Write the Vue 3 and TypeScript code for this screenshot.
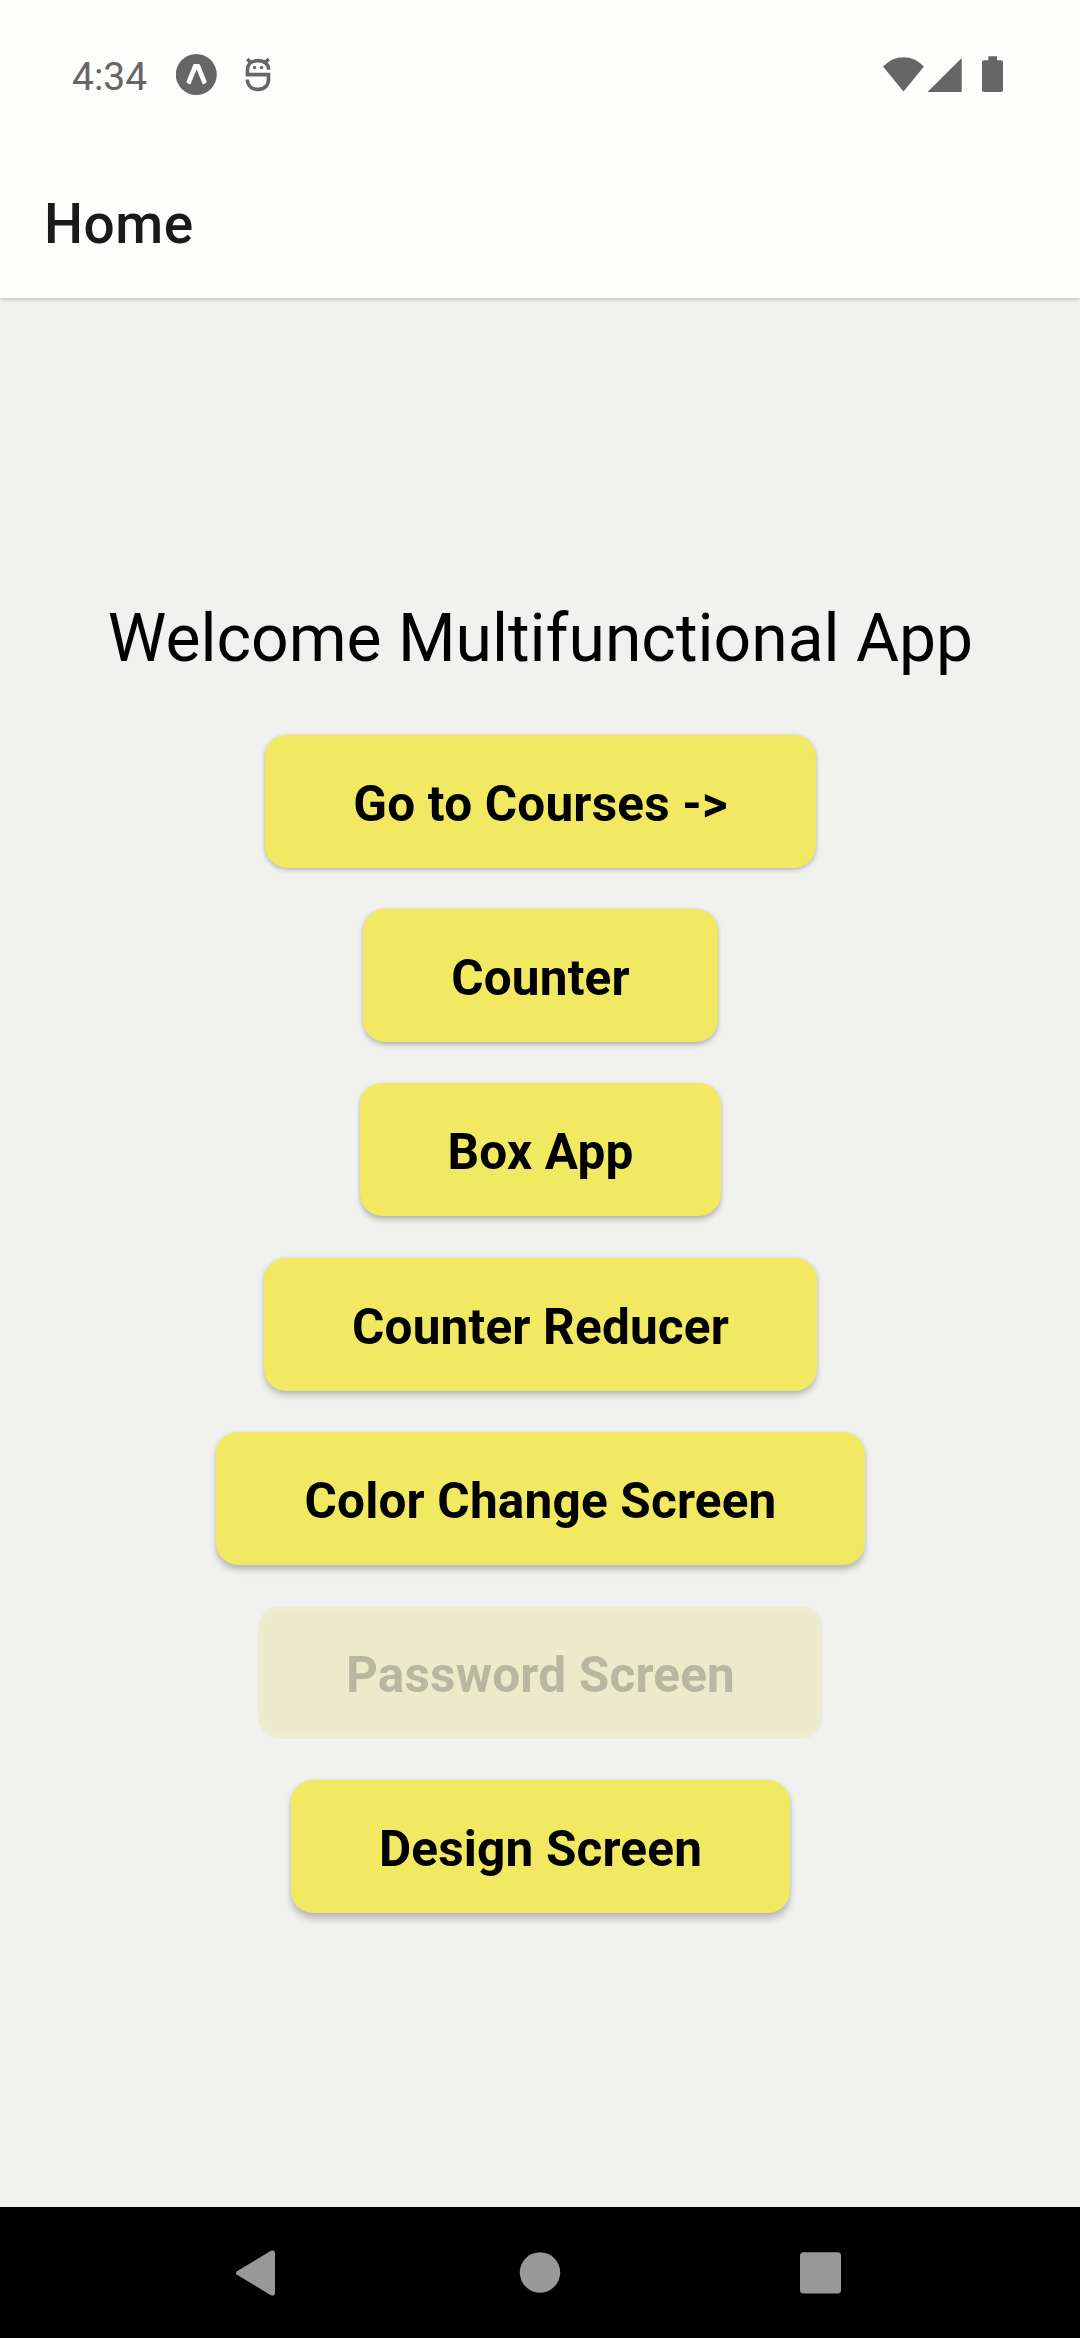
<script setup lang="ts">
interface MenuItem {
  label: string
  pressed?: boolean
}

const items: MenuItem[] = [
  { label: 'Go to Courses ->' },
  { label: 'Counter' },
  { label: 'Box App' },
  { label: 'Counter Reducer' },
  { label: 'Color Change Screen' },
  { label: 'Password Screen', pressed: true },
  { label: 'Design Screen' },
]

// Shadows fall longer the further a button is from the top of the screen.
const shadow = (index: number): string => {
  const y = 2 + index * 0.6
  return `0 ${y}px ${5 + index * 0.4}px rgba(0, 0, 0, 0.22), 0 0 4px rgba(0, 0, 0, 0.06)`
}
</script>

<template>
  <div class="screen">
    <div class="top">
      <div class="status">
        <span class="clock">4:34</span>
        <svg width="42" height="42" viewBox="0 0 42 42">
          <circle cx="20.300" cy="20.500" r="20.500" fill="#666" />
          <path
            d="M18.400 10h4.400q.9 0 1.200.9l6.600 16.300q.3.9-.4 1.500l-2.400 1.500q-.8.4-1.300-.5L20.600 15.500 14.700 29.700q-.5.9-1.300.5l-2.400-1.500q-.7-.6-.4-1.500l6.600-16.300q.3-.9 1.200-.9z"
            fill="#fdfdfb"
          />
        </svg>
        <svg class="debug" width="28" height="38" viewBox="0 0 28 38" fill="none" stroke="#666" stroke-width="3.600">
          <path d="M2.200 3l4.300 4M23.800 3l-4.300 4" />
          <path d="M23.700 13.800C23.700 8 19.500 4.600 13 4.600S2.500 8 2.500 13.800V18.600H23.500V23C23.500 30 19 33.400 13 33.400S2.500 30 2.300 23.500" />
          <circle cx="9.500" cy="11.500" r="1.700" fill="#666" stroke="none" />
          <circle cx="16.500" cy="11.500" r="1.700" fill="#666" stroke="none" />
        </svg>
        <span class="grow"></span>
        <svg width="120" height="38" viewBox="0 0 120 38" fill="#666">
          <path d="M0 10.500Q9 1.300 20.500 1.300T41 10.500L20.500 35.500z" />
          <path d="M44.500 36L78.700 2V36z" />
          <path d="M105.300 .300h8.700v3.900h4q2 0 2 2V34q0 2-2 2H101q-2 0-2-2V6.200q0-2 2-2h4.300z" />
        </svg>
      </div>
      <header class="header"><h1>Home</h1></header>
    </div>
    <main class="content">
      <p class="welcome">Welcome Multifunctional App</p>
      <button
        v-for="(item, i) in items"
        :key="item.label"
        class="btn"
        :class="{ pressed: item.pressed }"
        :style="{ boxShadow: item.pressed ? undefined : shadow(i) }"
      >
        {{ item.label }}
      </button>
    </main>
    <nav class="nav">
      <svg width="605" height="46" viewBox="0 0 605 46" fill="#989898">
        <path d="M1 21.200L34.500 1Q39 -1 39 3.500V42.500Q39 47 34.500 45L1 24.800Q-1 23 1 21.200z" />
        <circle cx="304" cy="22.500" r="20.200" />
        <rect x="564" y="2.300" width="41" height="41.200" rx="3.500" />
      </svg>
    </nav>
  </div>
</template>

<style>
body {
  margin: 0;
}
</style>

<style scoped>
.screen {
  width: 1080px;
  height: 2338px;
  display: flex;
  flex-direction: column;
  overflow: hidden;
  background: #f1f1f0;
  font-family: Roboto, "Noto Sans", sans-serif;
}
.top {
  flex: none;
  background: #fdfdfb;
  box-shadow: 0 1px 5px rgba(0, 0, 0, 0.24);
}
.status {
  box-sizing: border-box;
  height: 150px;
  display: flex;
  align-items: flex-start;
  padding: 54px 77px 0 72px;
}
.clock {
  width: 104px;
  font-size: 39px;
  line-height: 46px;
  color: #666;
}
.debug {
  margin: 2px 0 0 27px;
}
.grow {
  flex: 1;
}
.status > svg:last-child {
  margin-top: 2px;
}
.header {
  box-sizing: border-box;
  height: 148px;
  display: flex;
  align-items: center;
  padding: 0 44px;
}
h1 {
  margin: 0;
  font-size: 55px;
  line-height: 64px;
  font-weight: 500;
  letter-spacing: 0.5px;
  color: #1a1a1b;
}
.content {
  flex: 1;
  display: flex;
  flex-direction: column;
  align-items: center;
  padding-left: 1px;
}
.welcome {
  margin: 302px 0 57px;
  font-size: 66px;
  line-height: 78px;
  color: #000;
  white-space: nowrap;
}
.btn {
  height: 133px;
  margin: 0 0 41.200px;
  padding: 5px 88px 0;
  border: 0;
  border-radius: 22px;
  background: #f0e961;
  color: #000;
  font: 700 49.500px/66px Roboto, "Noto Sans", sans-serif;
  letter-spacing: 0.180px;
  white-space: nowrap;
}
.pressed {
  background: #ebebcb;
  color: #b8b8a2;
  box-shadow: inset 0 0 8px rgba(241, 241, 240, 0.7);
}
.nav {
  height: 131px;
  flex: none;
  display: flex;
  align-items: center;
  justify-content: center;
  padding-right: 4px;
  background: #000;
}
</style>
